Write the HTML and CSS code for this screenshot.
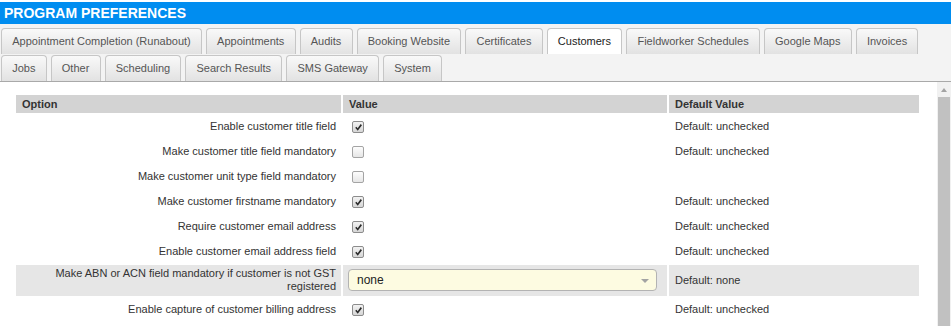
FILE: index.html
```html
<!DOCTYPE html>
<html lang="en">
<head>
    <meta charset="UTF-8">
    <meta name="viewport" content="width=device-width, initial-scale=1.0">
    <title>Program Preferences</title>
    <link rel="stylesheet" href="styles.css">
</head>
<body>
    <div class="title-bar">PROGRAM PREFERENCES</div>

    <div class="tab-strip">
        <div class="tab-row">
            <a class="tab">Appointment Completion (Runabout)</a>
            <a class="tab">Appointments</a>
            <a class="tab">Audits</a>
            <a class="tab">Booking Website</a>
            <a class="tab">Certificates</a>
            <a class="tab active">Customers</a>
            <a class="tab">Fieldworker Schedules</a>
            <a class="tab">Google Maps</a>
            <a class="tab">Invoices</a>
        </div>
        <div class="tab-row">
            <a class="tab">Jobs</a>
            <a class="tab">Other</a>
            <a class="tab">Scheduling</a>
            <a class="tab">Search Results</a>
            <a class="tab">SMS Gateway</a>
            <a class="tab">System</a>
        </div>
    </div>

    <div class="main">
        <div class="content">
            <table class="prefs">
                <thead>
                    <tr>
                        <th class="col-option">Option</th>
                        <th class="col-value">Value</th>
                        <th>Default Value</th>
                    </tr>
                </thead>
                <tbody>
                    <tr>
                        <td class="opt">Enable customer title field</td>
                        <td class="val"><span class="check on"><svg viewBox="0 0 13 13"><path d="M2.6 6.9 4.1 5.5 5.5 7.3 9.1 2.5 10.6 3.7 5.6 10.2Z"/></svg></span></td>
                        <td class="def">Default: unchecked</td>
                    </tr>
                    <tr>
                        <td class="opt">Make customer title field mandatory</td>
                        <td class="val"><span class="check"></span></td>
                        <td class="def">Default: unchecked</td>
                    </tr>
                    <tr>
                        <td class="opt">Make customer unit type field mandatory</td>
                        <td class="val"><span class="check"></span></td>
                        <td class="def"></td>
                    </tr>
                    <tr>
                        <td class="opt">Make customer firstname mandatory</td>
                        <td class="val"><span class="check on"><svg viewBox="0 0 13 13"><path d="M2.6 6.9 4.1 5.5 5.5 7.3 9.1 2.5 10.6 3.7 5.6 10.2Z"/></svg></span></td>
                        <td class="def">Default: unchecked</td>
                    </tr>
                    <tr>
                        <td class="opt">Require customer email address</td>
                        <td class="val"><span class="check on"><svg viewBox="0 0 13 13"><path d="M2.6 6.9 4.1 5.5 5.5 7.3 9.1 2.5 10.6 3.7 5.6 10.2Z"/></svg></span></td>
                        <td class="def">Default: unchecked</td>
                    </tr>
                    <tr>
                        <td class="opt">Enable customer email address field</td>
                        <td class="val"><span class="check on"><svg viewBox="0 0 13 13"><path d="M2.6 6.9 4.1 5.5 5.5 7.3 9.1 2.5 10.6 3.7 5.6 10.2Z"/></svg></span></td>
                        <td class="def">Default: unchecked</td>
                    </tr>
                    <tr class="hl">
                        <td class="opt">Make ABN or ACN field mandatory if customer is not GST registered</td>
                        <td class="val">
                            <div class="select-wrap">
                                <select>
                                    <option>none</option>
                                </select>
                            </div>
                        </td>
                        <td class="def">Default: none</td>
                    </tr>
                    <tr>
                        <td class="opt">Enable capture of customer billing address</td>
                        <td class="val"><span class="check on"><svg viewBox="0 0 13 13"><path d="M2.6 6.9 4.1 5.5 5.5 7.3 9.1 2.5 10.6 3.7 5.6 10.2Z"/></svg></span></td>
                        <td class="def">Default: unchecked</td>
                    </tr>
                </tbody>
            </table>
        </div>

        <div class="scrollbar">
            <span class="scroll-up"></span>
            <span class="scroll-thumb"></span>
        </div>
    </div>
</body>
</html>
```

FILE: styles.css
```css
:root {
    --blue: #008df0;
    --text: #333;
    --tab-border: #c6c6c6;
    --head: #d3d3d3;
    --hl: #e6e6e6;
}

body {
    margin: 0;
    height: 326px;
    overflow: hidden;
    display: flex;
    flex-direction: column;
    font-family: "Liberation Sans", Arial, sans-serif;
    font-size: 11px;
    color: var(--text);
    background: white;
}

.title-bar {
    margin-top: 2px;
    height: 22px;
    line-height: 22px;
    padding-left: 4px;
    background: var(--blue);
    color: white;
    font-size: 14px;
    font-weight: bold;
}

/* tabs */

.tab-strip {
    display: flex;
    flex-direction: column;
    gap: 1px;
    padding: 4px 0 0 1px;
    background: #f3f3f3;
    border-bottom: 1px solid #a9a9a9;
}

.tab-row {
    display: flex;
    gap: 4px;
}

.tab {
    box-sizing: border-box;
    height: 26px;
    line-height: 25px;
    padding: 0 10.2px;
    border: 1px solid var(--tab-border);
    border-bottom: none;
    border-radius: 4px 4px 0 0;
    background: linear-gradient(#f9f9f9, #e2e2e2);
    color: #555;
    white-space: nowrap;
    cursor: pointer;
}

.tab.active {
    background: white;
    color: #222;
}

/* main area */

.main {
    flex: 1;
    display: flex;
    min-height: 0;
}

.content {
    flex: 1;
    padding: 11px 16px 0 14px;
}

.prefs {
    width: 100%;
    border-spacing: 2px;
    table-layout: fixed;
}

.prefs th {
    box-sizing: border-box;
    height: 18px;
    padding: 0 6px;
    background: var(--head);
    text-align: left;
    font-weight: bold;
    color: #333;
}

.prefs th.col-option {
    width: 325px;
}

.prefs th.col-value {
    width: 324px;
}

.prefs td {
    height: 23px;
    box-sizing: border-box;
    padding: 4px 6px;
    line-height: 15px;
    vertical-align: middle;
}

.prefs td.opt {
    text-align: right;
    padding-right: 5px;
}

.prefs td.val {
    padding-left: 5px;
}

.prefs tr.hl td {
    height: 31px;
    padding-top: 2px;
    padding-bottom: 3px;
    line-height: 13px;
    background: var(--hl);
}

.check {
    display: inline-block;
    box-sizing: border-box;
    width: 12px;
    height: 12px;
    margin-left: 4px;
    vertical-align: middle;
    border: 1px solid #a4a4a4;
    border-radius: 2px;
    background: linear-gradient(#fdfdfd, #e6e6e6);
}

.check.on {
    border-color: #8c8c8c;
    background: linear-gradient(#f2f2f2, #d6d6d6);
}

.check svg {
    display: block;
    width: 11px;
    height: 11px;
    margin: -0.5px 0 0 -0.5px;
    fill: #2b2b2b;
}

.select-wrap {
    position: relative;
    width: 309px;
}

.select-wrap select {
    appearance: none;
    -webkit-appearance: none;
    display: block;
    box-sizing: border-box;
    width: 100%;
    height: 22px;
    padding: 0 8px;
    border: 1px solid #b3b3b3;
    border-radius: 4px;
    background: #fdfbe1;
    font-family: "Liberation Sans", Arial, sans-serif;
    font-size: 12px;
    color: #222;
}

.select-wrap::after {
    content: "";
    position: absolute;
    right: 8px;
    top: 10px;
    border-left: 4px solid transparent;
    border-right: 4px solid transparent;
    border-top: 4px solid #a3a3a3;
}

/* fake scroll bar */

.scrollbar {
    width: 14px;
    display: flex;
    flex-direction: column;
    align-items: center;
    background: #f1f1f1;
}

.scroll-up {
    margin-top: 6px;
    width: 0;
    height: 0;
    border-left: 3.5px solid transparent;
    border-right: 3.5px solid transparent;
    border-bottom: 4px solid #a3a3a3;
}

.scroll-thumb {
    flex: 1;
    width: 12px;
    margin-top: 5px;
    background: #c1c1c1;
}
```
